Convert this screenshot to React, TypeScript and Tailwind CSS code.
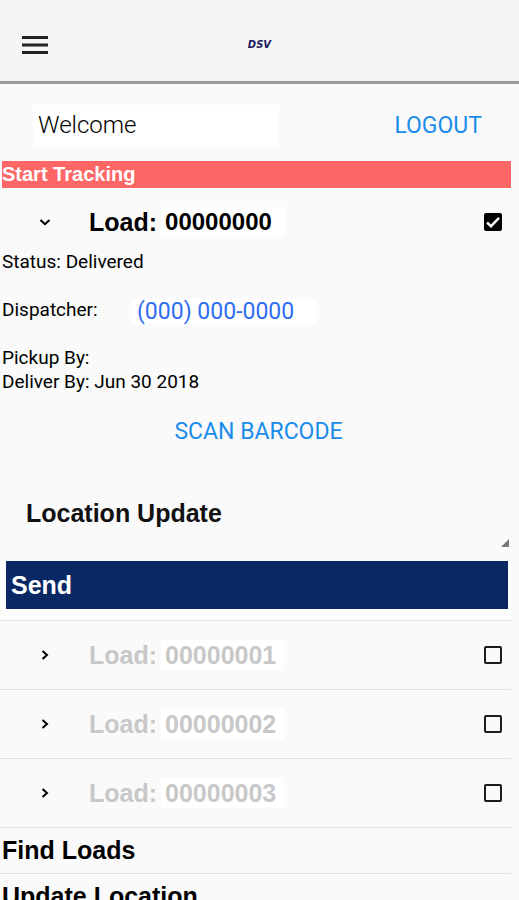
import { useState } from "react";

type LoadRowProps = {
  number: string;
  open?: boolean;
};

function Chevron({ open }: { open: boolean }) {
  return (
    <svg viewBox="0 0 12 12" className="size-3" fill="none" stroke="currentColor" strokeWidth="2">
      {open ? <path d="M1.5 4 6 8.2 10.5 4" /> : <path d="M3.5 2 8 6 3.5 10" />}
    </svg>
  );
}

function LoadCheckbox({ id, initial }: { id: string; initial: boolean }) {
  const [checked, setChecked] = useState(initial);
  return (
    <span className="relative flex size-[18px]">
      <input
        id={id}
        type="checkbox"
        checked={checked}
        onChange={(e) => setChecked(e.target.checked)}
        className="size-[18px] appearance-none rounded-xs border-2 border-[#1c1c1c] checked:border-black checked:bg-black"
      />
      {checked && (
        <svg
          viewBox="0 0 18 18"
          className="pointer-events-none absolute inset-0 size-[18px]"
          fill="none"
          stroke="#fff"
          strokeWidth="2.4"
        >
          <path d="M3 9.5 7 13.2 15 4.8" />
        </svg>
      )}
    </span>
  );
}

function LoadRow({ number, open = false }: LoadRowProps) {
  const id = `load-${number}`;
  return (
    <div className={open ? "flex h-[68px] items-center pr-[9px]" : "flex h-[69px] items-center border-t border-[#e4e4e4] pr-[9px]"}>
      <button type="button" aria-label={`Toggle load ${number}`} aria-expanded={open} className="flex w-[89px] justify-center text-black">
        <Chevron open={open} />
      </button>
      <label
        htmlFor={id}
        className={open ? "flex flex-1 items-center text-[25px] leading-[30px] font-bold text-black" : "flex flex-1 items-center text-[25px] leading-[30px] font-bold text-[#c8c8c8]"}
      >
        Load:
        <span className={open ? "ml-1 bg-white pr-[14px] pl-1 text-[24px]" : "ml-1 bg-white pr-2 pl-1"}>{number}</span>
      </label>
      <LoadCheckbox id={id} initial={open} />
    </div>
  );
}

export default function App() {
  return (
    <div className="h-screen overflow-hidden bg-[#fafafa] font-['Liberation_Sans',Arial,sans-serif] text-black">
      <header className="grid h-[84px] grid-cols-3 items-center border-b-3 border-[#9b9b9b] bg-[#f5f5f5] px-[22px] pt-2">
        <button type="button" aria-label="Menu" className="w-[26px]">
          <svg viewBox="0 0 26 18" className="h-[18px] w-[26px]" fill="#222">
            <path d="M0 0h26v3H0zM0 7.5h26v3H0zM0 15h26v3H0z" />
          </svg>
        </button>
        <span className="text-center font-['DejaVu_Sans',sans-serif] text-[10px] leading-3 font-bold text-[#1c1a5e] italic">DSV</span>
      </header>

      <main className="pr-2">
        <div className="flex h-[77px] items-center justify-between pt-[6px] pr-[29px] pl-[33px] font-[Roboto,sans-serif]">
          <p className="h-[42px] w-[246px] bg-white pl-[5px] text-[24px] leading-[40px] font-light">Welcome</p>
          <button type="button" className="text-[23px] leading-[40px] text-[#1b8ceb]">LOGOUT</button>
        </div>

        <button type="button" className="ml-[2px] block w-[calc(100%-2px)] bg-[#ff6666] text-left text-[20px] leading-[27px] font-bold text-white">
          Start Tracking
        </button>

        <LoadRow number="00000000" open />

        <div className="pl-[2px] font-[Roboto,sans-serif] text-[19px] leading-6">
          <p className="-mt-1.5">Status: Delivered</p>
          <div className="flex h-[72px] items-center">
            <span className="w-[130px]">Dispatcher:</span>
            <a href="tel:0000000000" className="mt-1 bg-white pr-[22px] pl-[5px] text-[23px] leading-[26px] text-[#2f6df0]">
              (000) 000-0000
            </a>
          </div>
          <p>Pickup By:</p>
          <p>Deliver By: Jun 30 2018</p>
        </div>

        <div className="flex h-[76px] items-center justify-center pl-[6px] font-[Roboto,sans-serif]">
          <button type="button" className="text-[23px] leading-[30px] text-[#1b8ceb]">SCAN BARCODE</button>
        </div>

        <div className="relative h-[91px] pt-3">
          <select aria-label="Update type" className="h-[64px] w-full appearance-none bg-transparent pl-[26px] text-[25px] font-bold text-[#111]">
            <option>Location Update</option>
          </select>
          <svg viewBox="0 0 8 8" className="pointer-events-none absolute right-[2px] bottom-[14px] size-2" fill="#777">
            <path d="M8 0v8H0z" />
          </svg>
        </div>

        <div className="bg-[#fdfdfd] pr-[3px] pb-[11px] pl-[6px]">
          <button type="button" className="block w-full bg-[#0a2864] pl-[5px] text-left text-[25px] leading-[48px] font-bold text-white">
            Send
          </button>
        </div>

        <LoadRow number="00000001" />
        <LoadRow number="00000002" />
        <LoadRow number="00000003" />

        <button type="button" className="block w-full border-t border-[#e4e4e4] pl-[2px] text-left text-[25px] leading-[45px] font-bold">
          Find Loads
        </button>
        <button type="button" className="block w-full border-t border-[#e4e4e4] pl-[2px] text-left text-[25px] leading-[45px] font-bold">
          Update Location
        </button>
      </main>
    </div>
  );
}
